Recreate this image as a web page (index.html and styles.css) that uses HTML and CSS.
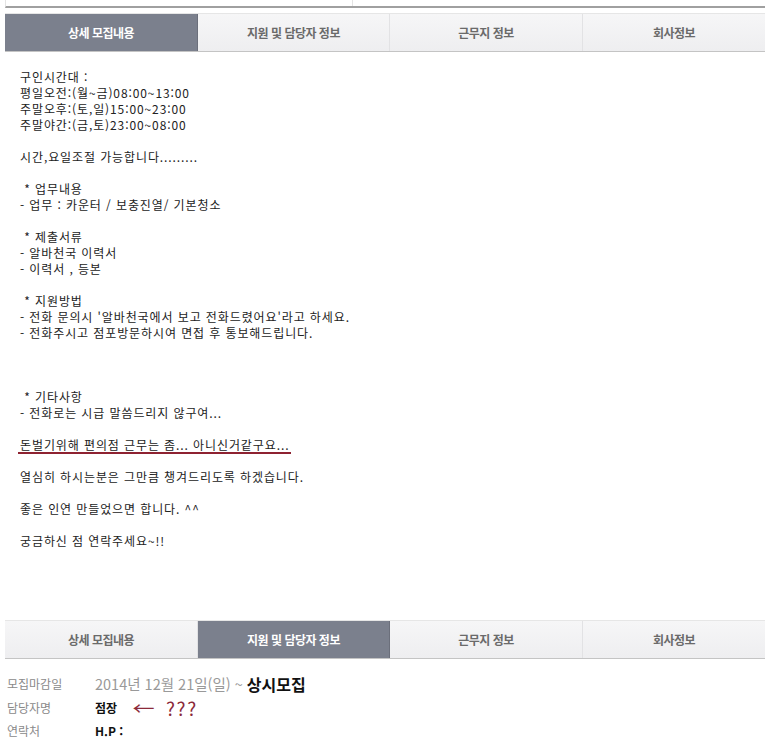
FILE: index.html
```html
<!DOCTYPE html>
<html lang="ko">
<head>
<meta charset="utf-8">
<link rel="stylesheet" href="styles.css">
</head>
<body>
<div class="page">
  <div class="topbox"><div class="topcell"></div><div class="topcell2"></div></div>
  <div class="tabs first">
    <div class="tab on">상세 모집내용</div>
    <div class="tab">지원 및 담당자 정보</div>
    <div class="tab">근무지 정보</div>
    <div class="tab">회사정보</div>
  </div>
  <div class="content">
<div class="ln">구인시간대 :</div>
<div class="ln">평일오전:(월~금)08:00~13:00</div>
<div class="ln">주말오후:(토,일)15:00~23:00</div>
<div class="ln">주말야간:(금,토)23:00~08:00</div>
<div class="ln"></div>
<div class="ln">시간,요일조절 가능합니다.........</div>
<div class="ln"></div>
<div class="ln">&nbsp;* 업무내용</div>
<div class="ln">- 업무 : 카운터 / 보충진열/ 기본청소</div>
<div class="ln"></div>
<div class="ln">&nbsp;* 제출서류</div>
<div class="ln">- 알바천국 이력서</div>
<div class="ln">- 이력서 , 등본</div>
<div class="ln"></div>
<div class="ln">&nbsp;* 지원방법</div>
<div class="ln">- 전화 문의시 '알바천국에서 보고 전화드렸어요'라고 하세요.</div>
<div class="ln">- 전화주시고 점포방문하시여 면접 후 통보해드립니다.</div>
<div class="ln"></div>
<div class="ln"></div>
<div class="ln"></div>
<div class="ln">&nbsp;* 기타사항</div>
<div class="ln">- 전화로는 시급 말씀드리지 않구여...</div>
<div class="ln"></div>
<div class="ln"><span class="mark">돈벌기위해 편의점 근무는 좀... 아니신거같구요...</span></div>
<div class="ln"></div>
<div class="ln">열심히 하시는분은 그만큼 챙겨드리도록 하겠습니다.</div>
<div class="ln"></div>
<div class="ln">좋은 인연 만들었으면 합니다. ^^</div>
<div class="ln"></div>
<div class="ln">궁금하신 점 연락주세요~!!</div>
  </div>
  <div class="tabs second">
    <div class="tab">상세 모집내용</div>
    <div class="tab on">지원 및 담당자 정보</div>
    <div class="tab">근무지 정보</div>
    <div class="tab">회사정보</div>
  </div>
  <div class="info">
    <div class="row"><span class="lbl">모집마감일</span><span class="val date">2014년 12월 21일(일) ~ <b>상시모집</b></span></div>
    <div class="row"><span class="lbl">담당자명</span><span class="val"><b>점장</b><span class="arrow">←</span><span class="note">???</span></span></div>
    <div class="row"><span class="lbl">연락처</span><span class="val"><b>H.P :</b></span></div>
  </div>
</div>
</body>
</html>
```

FILE: styles.css
```css
html, body {
  margin: 0;
  padding: 0;
  background: #fff;
}
.page {
  width: 765px;
  height: 739px;
  overflow: hidden;
  font-family: "Noto Sans CJK KR", "Noto Sans", sans-serif;
  color: #333;
}
.topbox {
  margin-left: 5px;
  height: 6px;
  border-left: 1px solid #e4e4e4;
  border-bottom: 2px solid #a0a0a0;
  display: flex;
}
.topcell {
  width: 346px;
  border-right: 1px solid #e4e4e4;
}
.tabs {
  margin-left: 5px;
  display: grid;
  grid-template-columns: 193px 192px 193px 1fr;
  height: 37px;
  border-top: 1px solid #e6e6e6;
  border-bottom: 1px solid #c4c4c4;
  background: linear-gradient(#f6f6f7, #eeeef0);
}
.tabs.first { margin-top: 5px; }
.tabs.second { margin-top: 71px; }
.tab {
  display: flex;
  align-items: center;
  justify-content: center;
  font-size: 12px;
  font-weight: 700;
  color: #6a6a6a;
  border-right: 1px solid #e2e2e4;
  letter-spacing: -0.5px;
}
.tab:last-child { border-right: none; }
.tab.on {
  background: #7b808d;
  color: #fff;
  border-right: 1px solid #6b6f7b;
}
.content {
  padding: 17px 0 0 20px;
  font-size: 12px;
  letter-spacing: 0.9px;
  line-height: 16px;
  color: #222;
}
.ln {
  height: 16px;
  white-space: pre;
}
.mark {
  display: inline-block;
  border-bottom: 2px solid #8e2231;
  line-height: 14px;
  margin-left: -2px;
  padding-left: 2px;
  padding-right: 2px;
}
.info {
  padding: 13px 0 0 7px;
}
.row {
  display: flex;
  align-items: center;
  height: 23.5px;
}
.lbl {
  width: 88px;
  font-size: 12px;
  color: #8a8a8a;
}
.val {
  font-size: 12px;
  color: #222;
  display: flex;
  align-items: center;
}
.val b { font-weight: 700; color: #111; }
.date {
  font-size: 14.5px;
  color: #999;
}
.date b { font-size: 16px; color: #111; margin-left: 4px; }
.arrow {
  margin-left: 18px;
  font-size: 17px;
  color: #8c2a3a;
  transform: scaleX(1.3);
}
.note {
  margin-left: 14px;
  font-size: 19px;
  letter-spacing: 1.5px;
  color: #8c2a3a;
}
```
